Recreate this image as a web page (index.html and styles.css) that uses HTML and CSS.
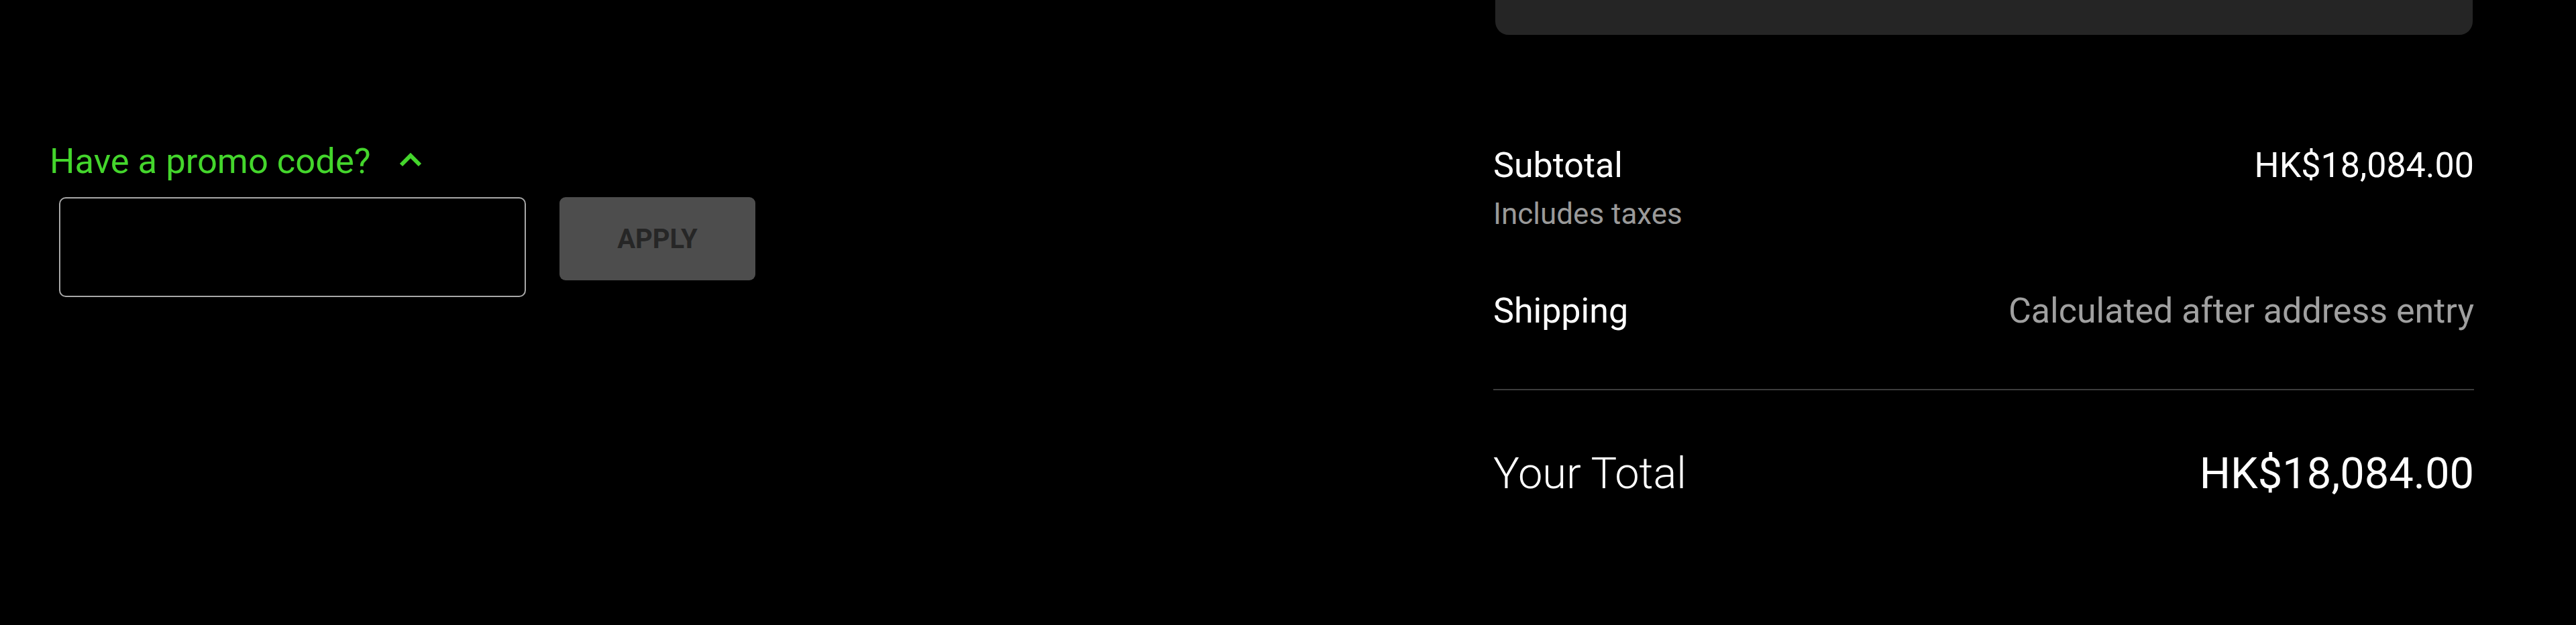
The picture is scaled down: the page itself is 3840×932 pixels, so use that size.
FILE: index.html
```html
<!DOCTYPE html>
<html lang="en">
<head>
    <meta charset="UTF-8">
    <meta name="viewport" content="width=device-width, initial-scale=1.0">
    <title>Cart - Summary</title>
    <link rel="stylesheet" href="styles.css">
</head>
<body>
    <div class="checkout">
        <div class="promo">
            <button class="promo-toggle" type="button">
                Have a promo code?
                <svg class="chevron" viewBox="0 0 34 22" width="34" height="22" aria-hidden="true">
                    <path d="M3 19 L17 5 L31 19" fill="none" stroke="currentColor" stroke-width="6"/>
                </svg>
            </button>
            <div class="promo-form">
                <input class="promo-input" type="text" aria-label="Promo code">
                <button class="apply-button" type="button" disabled>APPLY</button>
            </div>
        </div>

        <div class="summary">
            <div class="summary-card"></div>
            <div class="summary-row">
                <span class="label">Subtotal</span>
                <span class="value">HK$18,084.00</span>
            </div>
            <div class="note">Includes taxes</div>
            <div class="summary-row shipping">
                <span class="label">Shipping</span>
                <span class="value muted">Calculated after address entry</span>
            </div>
            <hr class="divider">
            <div class="summary-row total">
                <span class="label">Your Total</span>
                <span class="value">HK$18,084.00</span>
            </div>
        </div>
    </div>
</body>
</html>
```

FILE: styles.css
```css
* {
    margin: 0;
    padding: 0;
    box-sizing: border-box;
}

body {
    font-family: 'Roboto', 'Liberation Sans', sans-serif;
    background: #000;
    color: #fff;
    min-height: 100vh;
}

.checkout {
    display: flex;
    justify-content: space-between;
    padding: 0 152px 0 74px;
}

/* promo code */
.promo {
    padding-top: 209px;
}

.promo-toggle {
    display: flex;
    align-items: center;
    gap: 42px;
    background: none;
    border: none;
    color: #44d62c;
    font-family: inherit;
    font-size: 52.5px;
    line-height: 1.2;
    cursor: pointer;
}

.chevron {
    margin-top: -6px;
}

.promo-form {
    display: flex;
    align-items: flex-start;
    gap: 50px;
    margin-top: 22px;
    padding-left: 14px;
}

.promo-input {
    width: 696px;
    height: 149px;
    background: #000;
    border: 2px solid #a8a8a8;
    border-radius: 10px;
    color: #fff;
    font-size: 44px;
    padding: 0 24px;
}

.apply-button {
    width: 292px;
    height: 124px;
    background: #4d4d4d;
    border: none;
    border-radius: 9px;
    color: #262626;
    font-family: inherit;
    font-size: 40px;
    font-weight: 700;
}

/* order summary */
.summary {
    width: 1462px;
}

.summary-card {
    height: 52px;
    margin-left: 3px;
    margin-right: 2px;
    background: #252525;
    border-radius: 0 0 20px 20px;
    margin-bottom: 164px;
}

.summary-row {
    display: flex;
    justify-content: space-between;
    font-size: 52px;
    line-height: 1.2;
}

.note {
    color: #9a9a9a;
    font-size: 44px;
    line-height: 1.2;
    margin-top: 15px;
}

.shipping {
    margin-top: 87px;
}

.muted {
    color: #a0a0a0;
}

.divider {
    border: none;
    border-top: 2px solid #3c3c3c;
    margin-top: 84px;
}

.total {
    font-size: 65px;
    margin-top: 85px;
}

.total .label {
    font-weight: 300;
}
```
